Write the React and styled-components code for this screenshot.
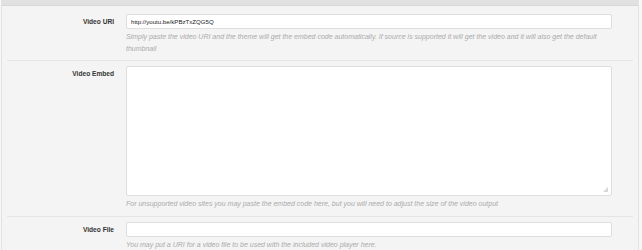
import styled, { createGlobalStyle } from 'styled-components';

const GlobalStyle = createGlobalStyle`
	body {
		margin: 0;
		background: #f7f7f7;
		font-family: 'Liberation Sans', Arial, sans-serif;
	}
`;

const Panel = styled.div`
	width: 636px;
	margin-left: 1px;
	height: 250px;
	overflow: hidden;
	background: #f4f4f4;
	border-left: 1px solid #e2e2e2;
	border-right: 1px solid #e2e2e2;
`;

const Header = styled.div`
	height: 22px;
	margin-top: -16px;
	padding-left: 10px;
	box-sizing: border-box;
	background: linear-gradient(#e6e6e6, #e0e0e0);
	border-bottom: 1px solid #d8d8d8;
	color: #b8b8b8;
	font-size: 7px;
	font-weight: bold;
	line-height: 19px;
`;

const Body = styled.div`
	padding: 0 5px;
`;

const Row = styled.div`
	display: grid;
	grid-template-columns: 107px 486px;
	column-gap: 12px;
	padding: ${(p) => p.$pad};
	border-bottom: ${(p) => (p.$last ? 'none' : '1px solid #e4e4e4')};
`;

const Label = styled.label`
	text-align: right;
	font-size: 6.6px;
	font-weight: bold;
	line-height: 15px;
	color: #333;
`;

const Field = styled.div`
	display: flex;
	flex-direction: column;
`;

const Input = styled.input`
	box-sizing: border-box;
	width: 100%;
	height: 15px;
	margin: 0;
	padding: 0 4px;
	border: 1px solid #dedede;
	border-radius: 2px;
	background: #fff;
	font-family: 'Liberation Sans', Arial, sans-serif;
	font-size: 6.1px;
	color: #222;
	outline: none;
`;

const AreaWrap = styled.div`
	position: relative;
`;

const TextArea = styled.textarea`
	box-sizing: border-box;
	width: 100%;
	height: 130px;
	margin: 0;
	padding: 3px 4px;
	border: 1px solid #dedede;
	border-radius: 2px;
	background: #fff;
	font-family: 'Liberation Sans', Arial, sans-serif;
	font-size: 6.1px;
	display: block;
	resize: none;
	outline: none;
`;

const Grip = styled.span`
	position: absolute;
	right: 4px;
	bottom: 4px;
	width: 5px;
	height: 5px;
	background:
		radial-gradient(circle, #aaa 0.6px, transparent 0.8px) 0 0 / 2px 2px;
	clip-path: polygon(100% 0, 100% 100%, 0 100%);
	pointer-events: none;
`;

const Hint = styled.p`
	margin: 2px 0 0;
	font-size: 7px;
	font-style: italic;
	line-height: 11.5px;
	color: #aaa;
`;

export default function App() {
	return (
		<>
			<GlobalStyle />
			<Panel>
				<Header>Featured Video Options</Header>
				<Body>
					<Row $pad="8px 0 6px">
						<Label>Video URI</Label>
						<Field>
							<Input defaultValue="http://youtu.be/kPBzTxZQG5Q" />
							<Hint>
								Simply paste the video URI and the theme will get the embed code
								automatically. If source is supported it will get the video and it
								will also get the default thumbnail
							</Hint>
						</Field>
					</Row>
					<Row $pad="5px 0 6px">
						<Label>Video Embed</Label>
						<Field>
							<AreaWrap>
								<TextArea />
								<Grip />
							</AreaWrap>
							<Hint>
								For unsupported video sites you may paste the embed code here, but
								you will need to adjust the size of the video output
							</Hint>
						</Field>
					</Row>
					<Row $pad="5px 0 6px" $last>
						<Label>Video File</Label>
						<Field>
							<Input />
							<Hint>
								You may put a URI for a video file to be used with the included
								video player here.
							</Hint>
						</Field>
					</Row>
				</Body>
			</Panel>
		</>
	);
}
